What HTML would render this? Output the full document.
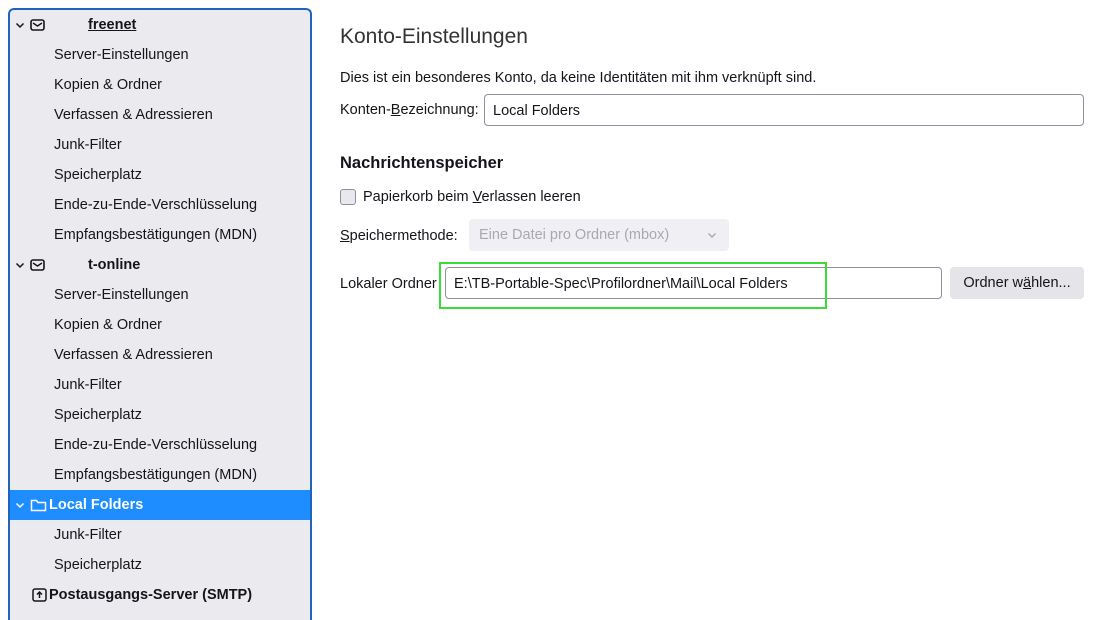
<!DOCTYPE html><html><head><style>
body{margin:0;width:1099px;height:612px;background:#fff;font-family:"Liberation Sans",sans-serif;font-size:14.5px;color:#15141a;position:relative;overflow:hidden}
#side{position:absolute;left:8px;top:8px;width:300px;height:610px;border:2px solid #1f63bd;border-bottom:none;border-radius:6px 6px 0 0;background:#ebebef}
.r{position:absolute;left:0;width:300px;height:30px;line-height:31px;white-space:nowrap}
.c{padding-left:44px}
.h{font-weight:bold}
.sel{background:#1e8dff;color:#fff}
.a{position:absolute;color:#15141a}
.inp{position:absolute;border:1px solid #8f8f9d;border-radius:4px;background:#fff;height:30px;line-height:30px;padding-left:8px;box-sizing:border-box}
.chev{position:absolute;left:5px;top:12px}
</style></head><body>
<div id="side">
<div class="r h" style="top:0"><svg class="chev" width="10" height="7"><path d="M1.5 1.5l3.5 3.5 3.5-3.5" fill="none" stroke="#15141a" stroke-width="1.5"/></svg><svg style="position:absolute;left:20px;top:9px" width="16" height="12"><rect x="1" y="1" width="13" height="10" rx="2" fill="none" stroke="#15141a" stroke-width="1.6"/><path d="M3 4l4.5 3 4.5-3" fill="none" stroke="#15141a" stroke-width="1.4"/></svg><span style="position:absolute;left:78px;text-decoration:underline">freenet</span></div>
<div class="r c" style="top:30px">Server-Einstellungen</div>
<div class="r c" style="top:60px">Kopien &amp; Ordner</div>
<div class="r c" style="top:90px">Verfassen &amp; Adressieren</div>
<div class="r c" style="top:120px">Junk-Filter</div>
<div class="r c" style="top:150px">Speicherplatz</div>
<div class="r c" style="top:180px">Ende-zu-Ende-Verschlüsselung</div>
<div class="r c" style="top:210px">Empfangsbestätigungen (MDN)</div>
<div class="r h" style="top:240px"><svg class="chev" width="10" height="7"><path d="M1.5 1.5l3.5 3.5 3.5-3.5" fill="none" stroke="#15141a" stroke-width="1.5"/></svg><svg style="position:absolute;left:20px;top:9px" width="16" height="12"><rect x="1" y="1" width="13" height="10" rx="2" fill="none" stroke="#15141a" stroke-width="1.6"/><path d="M3 4l4.5 3 4.5-3" fill="none" stroke="#15141a" stroke-width="1.4"/></svg><span style="position:absolute;left:78px">t-online</span></div>
<div class="r c" style="top:270px">Server-Einstellungen</div>
<div class="r c" style="top:300px">Kopien &amp; Ordner</div>
<div class="r c" style="top:330px">Verfassen &amp; Adressieren</div>
<div class="r c" style="top:360px">Junk-Filter</div>
<div class="r c" style="top:390px">Speicherplatz</div>
<div class="r c" style="top:420px">Ende-zu-Ende-Verschlüsselung</div>
<div class="r c" style="top:450px">Empfangsbestätigungen (MDN)</div>
<div class="r h sel" style="top:480px"><svg class="chev" width="10" height="7"><path d="M1.5 1.5l3.5 3.5 3.5-3.5" fill="none" stroke="#fff" stroke-width="1.5"/></svg><svg style="position:absolute;left:20px;top:8px" width="17" height="14"><path d="M1.5 2.5h5l1.5 2h7.5v8h-14z" fill="none" stroke="#fff" stroke-width="1.5"/></svg><span style="position:absolute;left:39px">Local Folders</span></div>
<div class="r c" style="top:510px">Junk-Filter</div>
<div class="r c" style="top:540px">Speicherplatz</div>
<div class="r h" style="top:570px"><svg style="position:absolute;left:22px;top:7px" width="16" height="15"><rect x="1" y="2" width="13" height="12" rx="2" fill="none" stroke="#15141a" stroke-width="1.5"/><path d="M7.5 11V5M5 7.5l2.5-2.5 2.5 2.5" fill="none" stroke="#15141a" stroke-width="1.5"/></svg><span style="position:absolute;left:39px">Postausgangs-Server (SMTP)</span></div>
</div>
<div class="a" style="left:340px;top:25px;font-size:21px;color:#333">Konto-Einstellungen</div>
<div class="a" style="left:340px;top:70px">Dies ist ein besonderes Konto, da keine Identitäten mit ihm verknüpft sind.</div>
<div class="a" style="left:340px;top:102px">Konten-<u>B</u>ezeichnung:</div>
<div class="inp" style="left:484px;top:94px;width:600px;height:32px;line-height:32px">Local Folders</div>
<div class="a" style="left:340px;top:154px;font-size:16.5px;font-weight:bold">Nachrichtenspeicher</div>
<div style="position:absolute;left:340px;top:189px;width:14px;height:14px;border:1px solid #8f8f9d;border-radius:3px;background:#e9e9ed"></div>
<div class="a" style="left:363px;top:189px">Papierkorb beim <u>V</u>erlassen leeren</div>
<div class="a" style="left:340px;top:228px"><u>S</u>peichermethode:</div>
<div style="position:absolute;left:469px;top:219px;width:260px;height:32px;background:#f0f0f4;border-radius:4px;color:#a8a8b0;line-height:33px;padding-left:10px;box-sizing:border-box">Eine Datei pro Ordner (mbox)<svg style="position:absolute;left:238px;top:13px" width="10" height="7"><path d="M1.5 1.5l3.5 3.5 3.5-3.5" fill="none" stroke="#a8a8b0" stroke-width="1.4"/></svg></div>
<div class="a" style="left:340px;top:276px">Lokaler Ordner</div>
<div class="inp" style="left:445px;top:267px;width:497px;height:32px;line-height:32px">E:\TB-Portable-Spec\Profilordner\Mail\Local Folders</div>
<div style="position:absolute;left:439px;top:262px;width:384px;height:43px;border:2px solid #3cdb3c"></div>
<div style="position:absolute;left:950px;top:267px;width:134px;height:32px;background:#e5e5e9;border-radius:4px;line-height:33px;text-align:center">Ordner w<u>ä</u>hlen...</div>
</body></html>
